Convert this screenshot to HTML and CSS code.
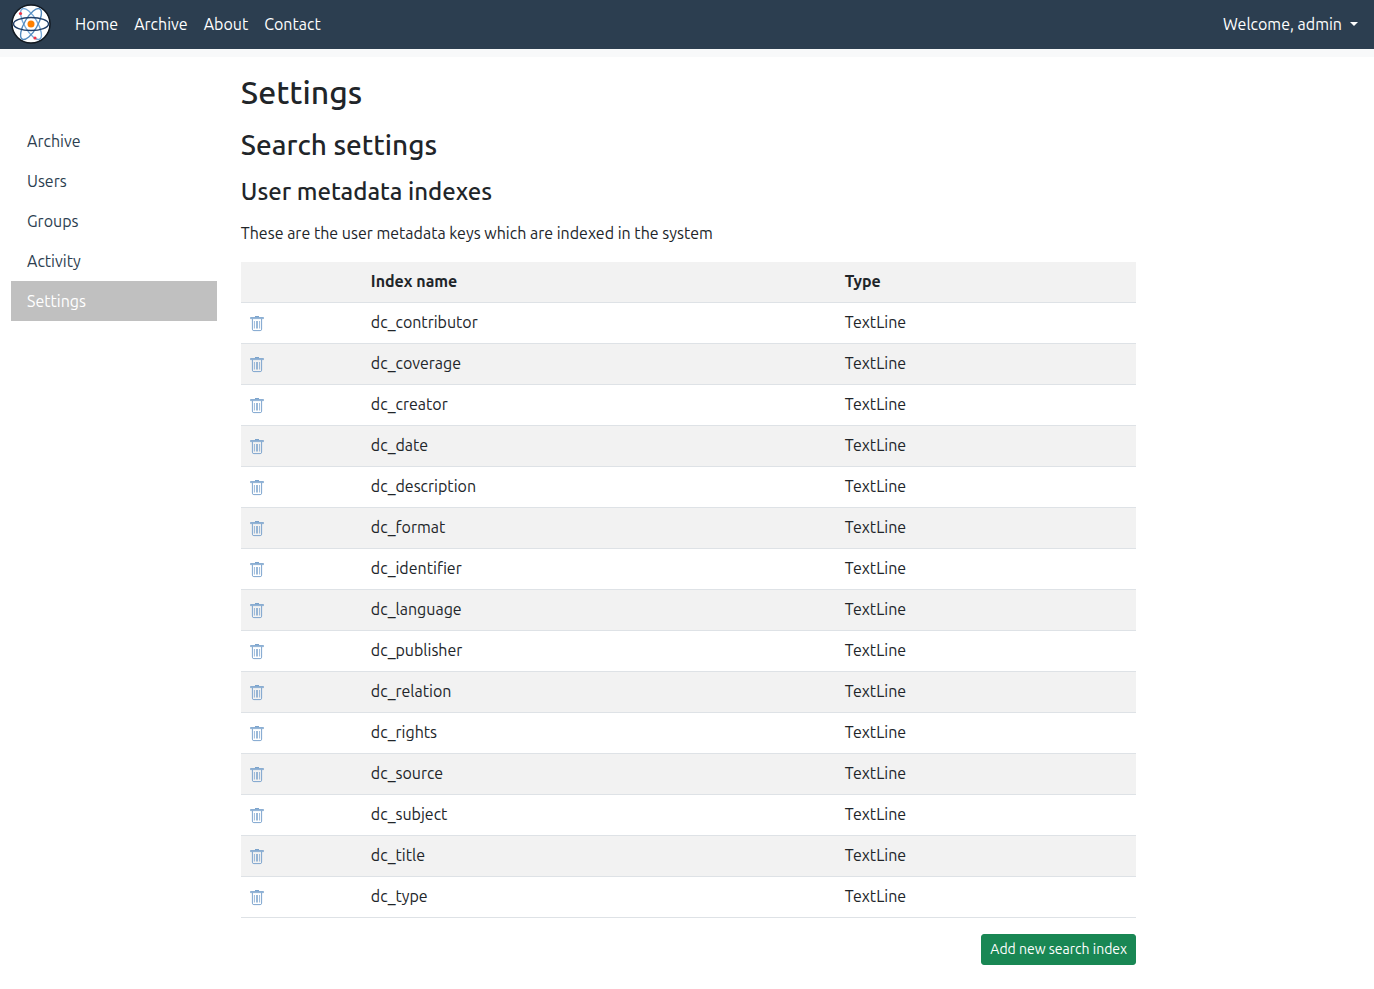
FILE: index.html
```html
<!DOCTYPE html>
<html lang="en">
<head>
<meta charset="utf-8">
<title>Settings</title>
<link rel="stylesheet" href="styles.css">
</head>
<body>
<svg class="sprite" aria-hidden="true">
  <symbol id="trash" viewBox="0 0 16 16">
    <g fill="none" stroke="currentColor">
      <path d="M6 .6h4" stroke-width="1"/>
      <path d="M1.5 1.5h13v1.1h-13z" stroke-width="0.8"/>
      <path d="M3.4 2.8v10.4q0 1.4 1.4 1.4h6.4q1.4 0 1.4-1.4V2.8" stroke-width="0.9"/>
      <path d="M5.4 5v7.5M7.5 5v7.5M8.5 5v7.5M10.6 5v7.5" stroke-width="0.7"/>
    </g>
  </symbol>
</svg>
<header class="navbar">
  <a class="brand" href="#" aria-label="Start page">
    <svg class="logo" viewBox="0 0 40 40">
      <circle cx="20" cy="20" r="19" fill="#fff" stroke="#111820" stroke-width="1.5"/>
      <g fill="none" stroke-width="1.4">
        <ellipse cx="20" cy="20" rx="17.5" ry="6.5" stroke="#77a9d8" transform="rotate(60 20 20)"/>
        <ellipse cx="20" cy="20" rx="17.5" ry="6.5" stroke="#5289bd" transform="rotate(120 20 20)"/>
        <ellipse cx="20" cy="20" rx="17.5" ry="6.5" stroke="#1f3d66"/>
      </g>
      <circle cx="20" cy="20" r="3.5" fill="#ff8000"/>
      <circle cx="9.5" cy="9.5" r="1.6" fill="#ef3347"/>
      <circle cx="24" cy="34" r="1.6" fill="#ef3347"/>
    </svg>
  </a>
  <nav class="menu">
    <a href="#">Home</a><a href="#">Archive</a><a href="#">About</a><a href="#">Contact</a>
  </nav>
  <button class="user" type="button">Welcome, admin<span class="caret"></span></button>
</header>
<div class="layout">
  <nav class="sidebar">
    <a href="#">Archive</a>
    <a href="#">Users</a>
    <a href="#">Groups</a>
    <a href="#">Activity</a>
    <a class="active" href="#" aria-current="page">Settings</a>
  </nav>
  <main class="content">
    <h1>Settings</h1>
    <h2>Search settings</h2>
    <h3>User metadata indexes</h3>
    <p>These are the user metadata keys which are indexed in the system</p>
    <table>
      <thead><tr><th class="tools"></th><th class="name">Index name</th><th>Type</th></tr></thead>
      <tbody>
        <tr><td><a href="#" aria-label="Delete dc_contributor"><svg class="icon"><use href="#trash"/></svg></a></td><td>dc_contributor</td><td>TextLine</td></tr>
        <tr><td><a href="#" aria-label="Delete dc_coverage"><svg class="icon"><use href="#trash"/></svg></a></td><td>dc_coverage</td><td>TextLine</td></tr>
        <tr><td><a href="#" aria-label="Delete dc_creator"><svg class="icon"><use href="#trash"/></svg></a></td><td>dc_creator</td><td>TextLine</td></tr>
        <tr><td><a href="#" aria-label="Delete dc_date"><svg class="icon"><use href="#trash"/></svg></a></td><td>dc_date</td><td>TextLine</td></tr>
        <tr><td><a href="#" aria-label="Delete dc_description"><svg class="icon"><use href="#trash"/></svg></a></td><td>dc_description</td><td>TextLine</td></tr>
        <tr><td><a href="#" aria-label="Delete dc_format"><svg class="icon"><use href="#trash"/></svg></a></td><td>dc_format</td><td>TextLine</td></tr>
        <tr><td><a href="#" aria-label="Delete dc_identifier"><svg class="icon"><use href="#trash"/></svg></a></td><td>dc_identifier</td><td>TextLine</td></tr>
        <tr><td><a href="#" aria-label="Delete dc_language"><svg class="icon"><use href="#trash"/></svg></a></td><td>dc_language</td><td>TextLine</td></tr>
        <tr><td><a href="#" aria-label="Delete dc_publisher"><svg class="icon"><use href="#trash"/></svg></a></td><td>dc_publisher</td><td>TextLine</td></tr>
        <tr><td><a href="#" aria-label="Delete dc_relation"><svg class="icon"><use href="#trash"/></svg></a></td><td>dc_relation</td><td>TextLine</td></tr>
        <tr><td><a href="#" aria-label="Delete dc_rights"><svg class="icon"><use href="#trash"/></svg></a></td><td>dc_rights</td><td>TextLine</td></tr>
        <tr><td><a href="#" aria-label="Delete dc_source"><svg class="icon"><use href="#trash"/></svg></a></td><td>dc_source</td><td>TextLine</td></tr>
        <tr><td><a href="#" aria-label="Delete dc_subject"><svg class="icon"><use href="#trash"/></svg></a></td><td>dc_subject</td><td>TextLine</td></tr>
        <tr><td><a href="#" aria-label="Delete dc_title"><svg class="icon"><use href="#trash"/></svg></a></td><td>dc_title</td><td>TextLine</td></tr>
        <tr><td><a href="#" aria-label="Delete dc_type"><svg class="icon"><use href="#trash"/></svg></a></td><td>dc_type</td><td>TextLine</td></tr>
      </tbody>
    </table>
    <div class="actions"><button class="add" type="button">Add new search index</button></div>
  </main>
</div>
</body>
</html>
```
FILE: styles.css
```css
* { box-sizing: border-box; }
body {
  margin: 0;
  background: #fff;
  color: #212529;
  font: 16px/24px Ubuntu, "Noto Sans", "Open Sans", sans-serif;
}
a { text-decoration: none; }
.sprite { display: none; }
.navbar {
  display: flex;
  align-items: center;
  padding: 4px 16px 5px 11px;
  background: #2c3e50;
  background-clip: padding-box;
  border-bottom: 8px solid #f8f9fa;
}
.brand, .logo { display: block; }
.logo { width: 40px; height: 40px; }
.menu { display: flex; gap: 16px; margin-left: 24px; }
.menu a, .user { color: #fff; }
.user {
  display: flex;
  align-items: center;
  gap: 8px;
  margin-left: auto;
  padding: 0;
  border: 0;
  background: none;
  font: inherit;
}
.caret {
  border: 4px solid transparent;
  border-top-color: #fff;
  border-bottom: 0;
}
.layout {
  display: grid;
  grid-template-columns: repeat(12, 1fr);
  column-gap: 24px;
  padding: 16px 8px 24px 11px;
}
.sidebar { grid-column: span 2; padding-top: 48px; }
.sidebar a { display: block; padding: 8px 16px; color: #2c3e50; }
.sidebar .active { background: #c0c0c0; color: #fff; }
.content { grid-column: span 8; }
h1, h2, h3 { margin: 0; font-weight: 500; }
h1 { margin-bottom: 16px; font-size: 32px; line-height: 38px; }
h2 { margin-bottom: 14px; font-size: 28px; line-height: 36px; }
h3 { margin-bottom: 14px; font-size: 24px; line-height: 30px; }
p { margin: 0 0 17px; }
table { width: 100%; table-layout: fixed; border-collapse: collapse; }
td, th { height: 41px; padding: 7px 8px 8px; border-bottom: 1px solid #dee2e6; text-align: left; vertical-align: top; }
th { height: 40px; }
thead tr, tbody tr:nth-child(even) { background: #f2f2f2; }
.tools { width: 122px; }
.name { width: 474px; }
.icon { display: block; width: 16px; height: 16px; margin-top: 6px; color: #6f9bc8; }
.actions { display: flex; justify-content: flex-end; margin-top: 16px; }
.add {
  padding: 4px 8px;
  border: 1px solid #198754;
  border-radius: 3px;
  background: #198754;
  color: #fff;
  font: 14px/21px Ubuntu, "Noto Sans", "Open Sans", sans-serif;
}
```
